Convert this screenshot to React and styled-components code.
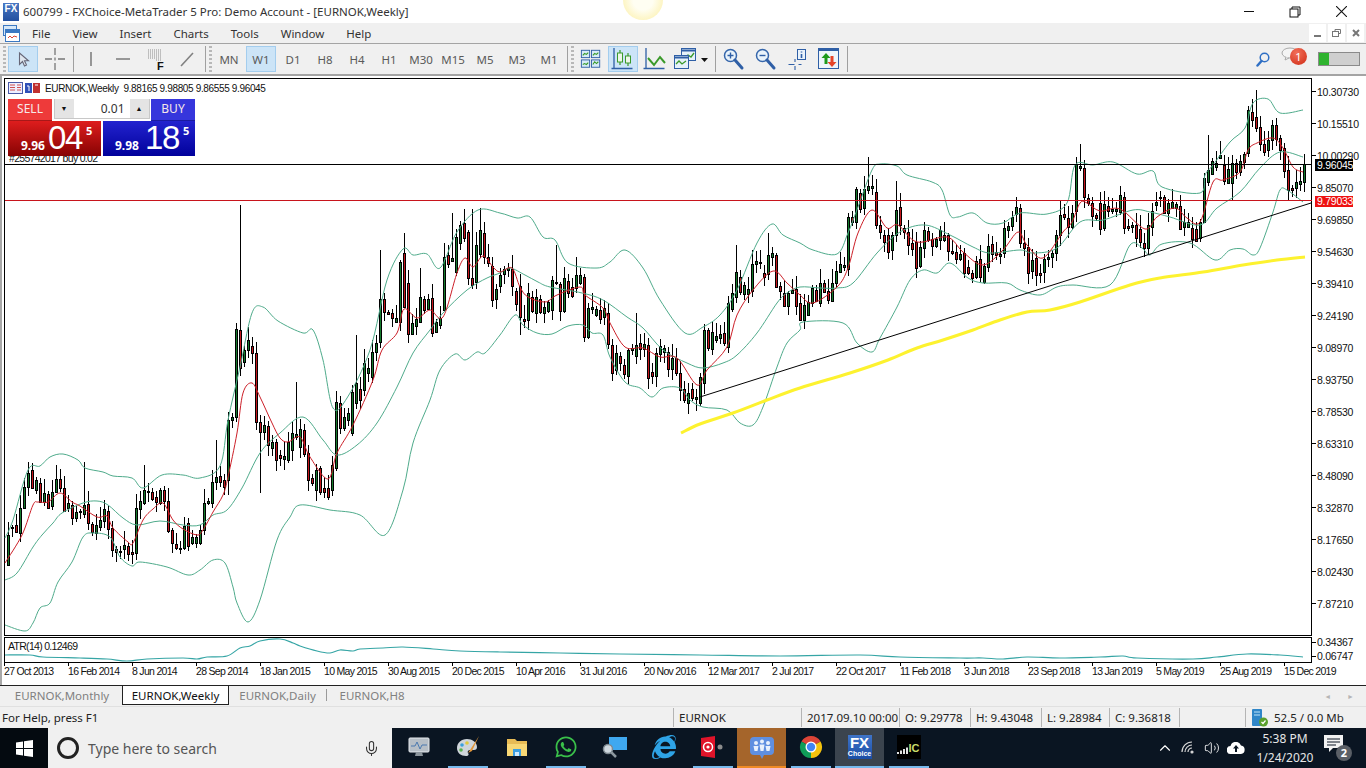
import React from 'react';
import styled, { createGlobalStyle } from 'styled-components';
import { FaWhatsapp, FaInternetExplorer } from 'react-icons/fa';
import { ChevronUp, Volume2, Mic } from 'lucide-react';

const GlobalStyle = createGlobalStyle`
  html, body { margin: 0; padding: 0; height: 100%; overflow: hidden; background: #fff; }
  body { font-family: "Noto Sans", "Open Sans", sans-serif; font-size: 11.5px; color: #222; }
  #root { height: 100%; }
`;

// Candle data: colour + top-bottom of the body in screen pixels, one every 4px from the start x
const BAR_BLOCKS = [
  [8, `g535-565 g527-528 r525-532 g508-533 g487-508 g473-487 r470-488 g480-490 r483-502 g493-502 r494-508 g492-506
    g479-492 r479-488 r488-511 g503-508 r505-518 g512-518 g511-512 g505-514 r504-523 r524-532 g525-533 g520-527
    g509-521 r511-529 r528-550 r549-552 g551-552 g545-549 r546-554 r552-554 g508-553 g501-509 g490-503 g491-492
    r492-499 r497-502 g490-503 r490-501 r501-531 r530-543 r544-548 r548-549 g526-548 r523-546 g537-543 g537-543
    g530-543 g503-530 g501-503 g482-503 g477-482 r476-482 r480-487`],
  [228, `g420-480 g417-420 g329-417 r330-368 g350-362 g340-350 r346-353 r353-422 r422-432 g425-432 r426-445 g442-448
    r442-460 r455-458 g456-459 g442-460 g433-450 g434-437 g429-447 r430-454 r453-480 r478-483 g470-490 r468-492
    r488-492 r488-497 g465-490 g402-468 r403-428 g417-428 g413-420 g392-433 g383-403 r389-400 g363-390 g368-373
    g352-377 g343-352 g299-342 r299-312 r312-314 r313-318 g318-322 g262-322 r253-307 r283-334 g323-334 g319-326
    g297-322 r299-310 g299-309 r298-333 g322-332 g318-325 g257-310 r255-264 g258-261 g237-272 g225-243 r223-238
    r232-278 r278-285 g245-282 g230-254 r233-257 r257-263 r266-300 g289-299`],
  [500, `g275-286 g269-274 g268-270 r269-286 r291-304 r286-317 r319-321 g293-320 r297-311 g297-313 r299-312 g307-313
    g302-311 g280-310 g282-283 r284-311 g278-311 r281-293 r287-296 g275-288 g275-283 r277-337 g308-337 g307-309
    g309-315 r310-319 g308-317 r313-344 r345-373 g353-370 r356-363 r365-374 g350-376 g348-350 g345-356 r343-349
    g344-349 r345-378 r372-376 g353-376 g346-354 g348-352 r352-369 g358-369 r358-373 r373-390 r389-400 g393-403
    r389-398 g397-399 g377-403 g330-383 r330-348 g332-349 g336-340 g334-338 r333-343 g303-347 g293-309 g272-297
    r277-292 g285-294 g289-294 g264-291 g261-264 g262-263 r273-277 g255-274 g253-257 r255-287 r286-291 r293-306
    g293-306 g290-293 r289-306`],
  [800, `r303-320 g305-320 g302-315 g288-303 r290-301 g283-303 r283-292 r291-300 g283-301 g271-283 g264-272 g265-267
    g217-269 r217-222 g189-222 r193-209 g189-208 g186-190 g186-188 r192-225 r225-232 r235-242 r235-252 g235-250
    g210-235 r207-225 r228-232 r232-245 r243-249 r242-268 g247-266 g230-248 r231-240 r239-246 g239-246 g230-240
    g235-240 r235-251 r251-253 r252-259 g254-259 r253-273 r267-273 r273-278 g261-277 r259-277 g266-282 g246-267
    r244-254 r252-255 g254-256 g228-253 g226-230 g217-226 g207-214 r208-243 r243-248 r247-273 g260-271 r258-275
    r273-275 g259-272 g257-259 g253-257 g235-253 g215-235 r214-217 r218-227 g213-227`],
  [1076, `g164-211 g166-168 r168-197 r198-203 r203-216 r215-218 r203-229 g204-228 r206-211 g209-211 g209-211 g195-212
    r197-228 r226-228 g225-227 r225-238 r229-242 r243-248 g225-248 g211-227 g202-205 g197-198 r197-213 g203-213
    g202-208 g204-208 r206-229 g222-227 g222-227 r228-239 r229-241 g222-238 g178-222 g170-182 g161-174 g163-167
    g155-158 r165-181 g169-183 g163-183 r163-172 g161-172 g154-162 g110-153 r112-120 r117-128 r127-144 r144-152
    g140-150 g125-140 r125-139 r138-150 r148-171 r170-190 r188-190 g182-188 g181-184 g164-182`],
];

// Long wicks that stand out in the reference, by candle x
const WICK_TOPS = {
  84: 462, 144: 465, 216: 440, 240: 205, 296: 382, 356: 335, 380: 250, 404: 233, 420: 268, 452: 213, 464: 209, 472: 209,
  480: 208, 556: 245, 576: 257, 636: 313, 736: 245, 768: 233, 868: 157, 896: 181, 1016: 197, 1076: 157, 1080: 144,
  1208: 135, 1256: 90,
};
const WICK_BOTTOMS = { 260: 493, 228: 495, 696: 411, 1232: 200, 520: 335 };

const bars = BAR_BLOCKS.flatMap(([startX, text]) =>
  text.trim().split(/\s+/).map((item, i) => {
    const x = startX + i * 4;
    const [top, bottom] = item.slice(1).split('-').map(Number);
    const seed = (x * 7919) % 97;
    return {
      x: x + 0.5,
      top,
      bottom,
      up: item[0] === 'g',
      high: WICK_TOPS[x] || top - (2 + seed % 13),
      low: WICK_BOTTOMS[x] || bottom + (1 + (seed * 3) % 11),
    };
  }));

// traced points -> curve through them
const smooth = text => {
  const p = text.trim().split(/\s+/).map(pair => pair.split(',').map(Number));
  let d = `M${p[0][0]} ${p[0][1]}`;
  for (let i = 0; i < p.length - 1; i++) {
    const p0 = p[i - 1] || p[i];
    const p1 = p[i];
    const p2 = p[i + 1];
    const p3 = p[i + 2] || p2;
    const c1x = p1[0] + (p2[0] - p0[0]) / 6;
    const c1y = p1[1] + (p2[1] - p0[1]) / 6;
    const c2x = p2[0] - (p3[0] - p1[0]) / 6;
    const c2y = p2[1] - (p3[1] - p1[1]) / 6;
    d += `C${c1x.toFixed(1)} ${c1y.toFixed(1)} ${c2x.toFixed(1)} ${c2y.toFixed(1)} ${p2[0]} ${p2[1]}`;
  }
  return d;
};

const UPPER = `5,538 13,520 28,470 40,466 50,457 63,454 78,460 85,468 103,472 113,476 132,478 143,488 162,475 183,475 200,478
  220,466 228,420 240,367 252,313 263,307 278,321 303,333 313,330 323,360 333,408 347,398 370,350 387,280 403,249 413,255
  427,254 440,268 457,232 478,210 500,213 517,218 530,217 543,237 555,240 568,263 597,268 610,262 625,250 643,268 660,300
  685,333 703,327 720,315 737,290 757,243 772,224 783,235 800,243 813,250 837,254 848,233 858,207 872,170 880,164 897,166
  907,175 932,182 942,190 950,215 958,217 973,213 987,223 1003,223 1020,213 1047,214 1067,203 1075,165 1093,165 1113,162
  1137,174 1153,171 1162,187 1200,193 1205,175 1213,165 1230,142 1245,128 1253,103 1268,99 1280,113 1303,110`;
const MIDDLE = `5,580 17,573 33,547 42,535 53,523 62,513 83,503 97,501 108,505 123,518 137,525 160,521 183,525 200,525 213,515
  227,510 242,488 260,453 280,433 303,417 323,440 337,455 357,445 377,423 397,387 413,353 430,330 443,313 467,290 487,278
  500,273 510,268 525,275 538,282 550,287 582,293 603,300 627,317 643,328 663,350 687,363 703,368 723,363 737,355 757,333
  777,303 787,293 800,287 820,288 837,288 853,283 877,253 900,232 925,225 950,235 973,247 990,253 1020,250 1033,253 1057,248
  1080,222 1103,220 1133,210 1150,212 1170,217 1200,225 1217,208 1240,192 1260,168 1280,152 1303,157`;
const LOWER = `5,625 25,631 33,623 40,608 50,603 58,582 72,562 83,537 93,533 110,537 120,557 132,566 140,562 167,567 188,575 200,570
  213,560 225,563 233,587 237,603 248,622 260,600 277,540 290,517 300,505 330,510 360,515 385,535 403,490 413,443 430,400
  440,370 455,354 465,360 477,352 485,353 500,335 515,315 523,325 537,333 552,334 568,326 583,325 592,333 603,335 610,357
  625,382 640,388 652,397 663,388 680,388 690,400 703,407 727,410 740,423 753,425 763,407 777,367 787,343 800,330 803,322
  843,323 857,343 872,352 880,338 897,307 910,280 923,270 937,273 950,263 968,278 983,283 1007,283 1020,290 1040,295 1057,287
  1073,285 1110,285 1130,245 1142,248 1150,255 1162,244 1190,243 1215,260 1230,250 1243,249 1253,255 1260,248 1273,212 1280,190
  1287,190 1303,202`;
const AVERAGE = `5,563 22,535 33,505 38,502 48,502 60,493 72,502 80,506 97,517 107,516 113,528 128,542 133,543 143,520 153,509 163,503
  173,520 183,529 197,535 203,530 213,512 223,495 228,477 237,433 243,393 252,383 260,397 272,423 280,438 288,442 300,437 310,457
  328,479 337,453 353,425 373,380 382,350 397,333 404,309 417,318 430,310 443,317 457,273 465,258 473,267 483,256 493,267 500,272
  512,268 520,287 528,297 545,302 557,295 580,287 585,295 603,308 610,323 625,347 643,348 660,357 677,358 697,385 707,370 727,347
  737,315 753,290 773,271 787,283 800,295 813,303 837,287 848,268 858,233 872,210 887,228 898,225 917,242 947,237 963,252 983,265
  1003,250 1018,232 1027,245 1043,258 1063,232 1072,222 1080,203 1087,203 1100,211 1120,209 1145,229 1157,217 1175,208 1187,218
  1200,222 1213,182 1223,180 1240,172 1248,150 1257,143 1273,138 1283,148 1293,167 1303,172`;
const YELLOW_TREND = `681,433 700,424 733,413 767,400 800,388 850,373 888,360 917,348 943,340 973,330 1000,320 1027,312 1050,310 1080,302
  1130,285 1160,278 1203,272 1243,265 1277,260 1305,257`;
const ATR_LINE = `5,655 30,655 43,657 80,658 107,659 127,661 147,659 183,658 197,659 207,657 227,656 240,648 250,646 260,641 280,639 293,643
  300,646 317,651 330,653 340,650 353,651 360,649 383,648 403,647 433,649 460,651 500,652 560,653 620,654 700,655 780,656 860,655
  900,657 960,658 983,658 1003,659 1027,657 1060,658 1100,657 1123,656 1137,658 1193,659 1217,657 1247,654 1280,655 1303,657`;

const PRICES = ['10.30730', '10.15510', '10.00290', '9.85070', '9.69850', '9.54630', '9.39410', '9.24190', '9.08970', '8.93750',
  '8.78530', '8.63310', '8.48090', '8.32870', '8.17650', '8.02430', '7.87210'];
const DATES = ['27 Oct 2013', '16 Feb 2014', '8 Jun 2014', '28 Sep 2014', '18 Jan 2015', '10 May 2015', '30 Aug 2015', '20 Dec 2015',
  '10 Apr 2016', '31 Jul 2016', '20 Nov 2016', '12 Mar 2017', '2 Jul 2017', '22 Oct 2017', '11 Feb 2018', '3 Jun 2018', '23 Sep 2018',
  '13 Jan 2019', '5 May 2019', '25 Aug 2019', '15 Dec 2019'];
const MENU = ['File', 'View', 'Insert', 'Charts', 'Tools', 'Window', 'Help'];
const PERIODS = ['MN', 'W1', 'D1', 'H8', 'H4', 'H1', 'M30', 'M15', 'M5', 'M3', 'M1'];

const Page = styled.div`
  position: relative;
  display: flex;
  flex-direction: column;
  width: 1366px;
  height: 768px;
  overflow: hidden;
`;

const Sun = styled.div`
  position: absolute;
  left: 623px;
  top: -20px;
  width: 40px;
  height: 40px;
  border-radius: 50%;
  background: radial-gradient(circle, #fffef2 35%, #fdf5c4 70%, #f1df8e 100%);
`;

const TitleBar = styled.div`
  display: flex;
  align-items: center;
  height: 23px;
  padding-left: 3px;
  background: #fff;
`;

const TitleText = styled.span`
  margin-left: 4px;
  font-size: 11.5px;
  color: #333;
  white-space: nowrap;
`;

const AppBadge = styled.div`
  display: flex;
  flex-direction: column;
  align-items: center;
  width: 16px;
  height: 18px;
  background: linear-gradient(#4a78c4, #23509f);
  color: #fff;
  font: bold 10px/11px "Liberation Sans", sans-serif;
`;

const WindowButtons = styled.div`
  display: flex;
  margin-left: auto;
  margin-right: 2px;
`;

const WindowButton = styled.div`
  display: flex;
  align-items: center;
  justify-content: center;
  width: 46px;
  height: 23px;
`;

const MenuBar = styled.div`
  display: flex;
  align-items: center;
  height: 20px;
  padding-left: 3px;
  background: #f0f0f0;
  border-bottom: 1px solid #a4a4a4;
`;

const MenuItem = styled.span`
  margin-left: ${p => p.$first ? '12px' : '22px'};
  font-size: 11.5px;
  color: #333;
`;

const DocButtons = styled.div`
  display: flex;
  gap: 2px;
  margin-left: auto;
  margin-right: 2px;
`;

const DocButton = styled.div`
  display: flex;
  align-items: center;
  justify-content: center;
  width: 17px;
  height: 18px;
  background: #fff;
`;

const ToolBar = styled.div`
  display: flex;
  align-items: center;
  height: 30px;
  padding-left: 2px;
  background: #f0f0f0;
  border-bottom: 2px solid #a4a4a4;
`;

const Grip = styled.div`
  width: 3px;
  height: 26px;
  margin: 0 2px 0 1px;
  background: repeating-linear-gradient(#b8b8b8 0 2px, transparent 2px 4px);
`;

const ToolSeparator = styled.div`
  width: 1px;
  height: 26px;
  margin: 0 2px 0 1px;
  background: #a0a0a0;
`;

const ToolButton = styled.div`
  display: flex;
  align-items: center;
  justify-content: center;
  flex: none;
  width: ${p => p.$wide ? '40px' : '30px'};
  height: 26px;
  margin-right: 2px;
  box-sizing: border-box;
  font-size: 11.5px;
  color: #5a5a5a;
  background: ${p => p.$active ? '#cce4f7' : 'transparent'};
  border: 1px solid ${p => p.$active ? '#a3cdee' : 'transparent'};
`;

const ToolRight = styled.div`
  display: flex;
  align-items: center;
  margin-left: auto;
  padding-right: 6px;
`;

const SearchSlot = styled.div`
  display: flex;
  margin-right: 11px;
`;

const NoticeSlot = styled.div`
  position: relative;
  width: 26px;
  height: 24px;
  margin-right: 11px;
`;

const NoticeBadge = styled.span`
  position: absolute;
  right: 0;
  top: 1px;
  display: flex;
  align-items: center;
  justify-content: center;
  width: 17px;
  height: 17px;
  border-radius: 50%;
  background: radial-gradient(circle at 40% 30%, #f2705a, #cf2b14);
  color: #fff;
  font-size: 11px;
`;

const SignalBar = styled.div`
  width: 42px;
  height: 14px;
  box-sizing: border-box;
  border: 1px solid #8a8a8a;
  background: linear-gradient(90deg, #2fb32f 0 10px, #cfcfcf 10px);
`;

const ChartPane = styled.div`
  position: relative;
  flex: 1;
  min-height: 0;
  background: #fff;
  border-left: 2px solid #a8a8a8;
  box-sizing: border-box;
`;

const ChartSvg = styled.svg`
  display: block;
  margin-left: -2px;
`;

const AxisText = styled.text`
  font-family: "Liberation Sans", sans-serif;
  font-size: 10.5px;
  letter-spacing: ${p => p.$tight ? '-0.7px' : '-0.25px'};
  fill: ${p => p.$light ? '#fff' : '#111'};
`;

const ChartLegend = styled.div`
  position: absolute;
  left: 6px;
  top: 6px;
  display: flex;
  align-items: center;
  gap: 5px;
  font: 10px "Liberation Sans", sans-serif;
  letter-spacing: -0.35px;
  color: #111;
  white-space: pre;
`;

const TradePanel = styled.div`
  position: absolute;
  left: 6px;
  top: 23px;
  width: 187px;
  background: #fff;
`;

const TradeTop = styled.div`
  display: flex;
  justify-content: space-between;
  height: 22px;
`;

const TradeButton = styled.div`
  width: 44px;
  text-align: center;
  line-height: 20px;
  font-size: 12px;
  color: #f6e8e8;
  background: ${p => p.$buy ? '#3636dc' : '#ee3a3a'};
  box-shadow: inset 0 -1px 0 ${p => p.$buy ? '#1a1aa0' : '#a81818'};
`;

const LotBox = styled.div`
  display: flex;
  width: 96px;
  height: 20px;
  box-sizing: border-box;
  border: 1px solid #c8c8c8;
  border-top: 0;
`;

const LotArrow = styled.div`
  display: flex;
  align-items: center;
  justify-content: center;
  width: 19px;
  background: #e4e4e4;
  font-size: 7px;
  color: #111;
`;

const LotValue = styled.div`
  flex: 1;
  padding-right: 5px;
  text-align: right;
  line-height: 19px;
  font-size: 12px;
  color: #333;
`;

const TradeBottom = styled.div`
  display: flex;
  gap: 2px;
  height: 35px;
`;

const PriceBox = styled.div`
  position: relative;
  display: flex;
  align-items: flex-end;
  flex: 1;
  padding-left: ${p => p.$buy ? '12px' : '13px'};
  color: #fff;
  background: ${p => p.$buy
    ? 'linear-gradient(#2323cf, #01019b)'
    : 'linear-gradient(#de1d1d, #870303)'};
`;

const PriceSmall = styled.span`
  margin-bottom: 3px;
  font: bold 12px/14px "Noto Sans", sans-serif;
`;

const PriceBig = styled.span`
  margin-left: ${p => p.$buy ? '6px' : '3px'};
  font: 33px/36px "Liberation Sans", sans-serif;
  letter-spacing: -1.3px;
`;

const PriceTail = styled.span`
  margin-left: 4px;
  align-self: flex-start;
  margin-top: 4px;
  font: bold 11px/12px "Noto Sans", sans-serif;
`;

const TabStrip = styled.div`
  display: flex;
  align-items: stretch;
  height: 20px;
  padding-left: 2px;
  background: #f0f0f0;
  border-top: 1px solid #222;
`;

const Tab = styled.div`
  display: flex;
  align-items: center;
  justify-content: center;
  box-sizing: border-box;
  width: ${p => p.$width}px;
  margin-bottom: 1px;
  font-size: 11.5px;
  color: ${p => p.$active ? '#111' : '#808080'};
  background: ${p => p.$active ? '#fff' : 'transparent'};
  border-left: 1px solid ${p => p.$active ? '#222' : 'transparent'};
  border-right: 1px solid ${p => p.$active ? '#222' : 'transparent'};
  border-bottom: 1px solid ${p => p.$active ? '#222' : 'transparent'};
`;

const TabDivider = styled.div`
  width: 1px;
  margin: 3px 0 5px;
  background: #9a9a9a;
`;

const TabArrows = styled.div`
  display: flex;
  gap: 16px;
  align-items: center;
  margin-left: auto;
  padding-right: 12px;
  font-size: 7px;
  color: #b5b5b5;
`;

const StatusBar = styled.div`
  display: flex;
  align-items: center;
  height: 22px;
  box-sizing: border-box;
  background: #f0f0f0;
  border-top: 1px solid #e0e0e0;
`;

const StatusCell = styled.div`
  display: flex;
  align-items: center;
  gap: 5px;
  box-sizing: border-box;
  width: ${p => p.$width}px;
  height: 19px;
  padding-left: ${p => p.$plain ? '2px' : '5px'};
  font-size: 11.5px;
  color: #222;
  white-space: nowrap;
  border-left: ${p => p.$plain ? '0' : '1px solid #b4b4b4'};
`;

const Taskbar = styled.div`
  display: flex;
  align-items: stretch;
  height: 40px;
  background: #0a1522;
  color: #fff;
`;

const StartButton = styled.div`
  display: flex;
  align-items: center;
  justify-content: center;
  width: 48px;
  background: #040a10;
`;

const SearchBox = styled.div`
  display: flex;
  align-items: center;
  box-sizing: border-box;
  width: 344px;
  padding: 0 12px 0 8px;
  background: #f0f0f0;
  color: #555;
  font-size: 14px;
`;

const Cortana = styled.div`
  width: 14px;
  height: 14px;
  margin: 0 9px 0 1px;
  border: 3px solid #222;
  border-radius: 50%;
  padding: 1px;
`;

const SearchLabel = styled.span`
  flex: 1;
`;

const TaskApps = styled.div`
  display: flex;
  padding-left: 2px;
`;

const TaskApp = styled.div`
  position: relative;
  display: flex;
  align-items: center;
  justify-content: center;
  width: 49px;
  padding-bottom: 2px;
  box-sizing: border-box;
  background: ${p => p.$bg || 'transparent'};

  &::after {
    content: '';
    display: ${p => p.$line ? 'block' : 'none'};
    position: absolute;
    bottom: 0;
    left: ${p => p.$bg ? '0' : '5px'};
    right: ${p => p.$bg ? '0' : '4px'};
    height: 2px;
    background: ${p => p.$line};
  }
`;

const FxTile = styled.div`
  width: 24px;
  height: 24px;
  background: linear-gradient(#3f74c8, #1a4ea6);
  text-align: center;
  font: bold 15px/15px "Liberation Sans", sans-serif;

  small {
    display: block;
    font-size: 7px;
    line-height: 7px;
  }
`;

const IcTile = styled.div`
  display: flex;
  align-items: flex-end;
  justify-content: flex-end;
  gap: 1px;
  width: 24px;
  height: 24px;
  padding: 0 1px 5px 0;
  box-sizing: border-box;
  background: #000;
  font: bold 11px/11px "Liberation Sans", sans-serif;
  color: #c9dc6b;
`;

const Tray = styled.div`
  display: flex;
  align-items: center;
  margin-left: auto;
  padding-right: 14px;
  font-size: 12px;
`;

const TraySlot = styled.div`
  display: flex;
  justify-content: center;
  width: ${p => p.$width || 24}px;
`;

const Clock = styled.div`
  width: 72px;
  text-align: center;
  line-height: 19px;
  color: #e6e6e6;
`;

const NotifyWrap = styled.div`
  position: relative;
  width: 28px;
  height: 26px;
  margin-left: 3px;
`;

const NotifyBadge = styled.span`
  position: absolute;
  right: 0;
  bottom: 0;
  width: 16px;
  height: 16px;
  border-radius: 50%;
  background: #5a5f66;
  text-align: center;
  line-height: 16px;
  font-size: 11px;
  font-weight: bold;
`;

const BLUE = '#2f5fa6';
const GREEN = '#3a9a2a';
const BAND = '#4fab8b';

function Glyph({ children, size = 24, view = 24 }) {
  return <svg width={size} height={size} viewBox={`0 0 ${view} ${view}`} fill="none">{children}</svg>;
}

function CursorIcon() {
  return <Glyph><path d="M8.5 6v11.5l3-3 2 4.5 2-1-2-4.2h4z" fill="#dfe6ee" stroke="#667" strokeWidth="1.1" /></Glyph>;
}

function CrossIcon() {
  return (
    <Glyph>
      <path d="M12 1v7M12 10.5v3M12 16v7M2 12h7M15 12h7" stroke="#777" strokeWidth="1.3" />
    </Glyph>
  );
}

function LineIcon({ d }) {
  return <Glyph><path d={d} stroke="#808080" strokeWidth="1.6" /></Glyph>;
}

function FiboIcon() {
  return (
    <Glyph>
      <path d="M5 3h14M5 5h14M5 7h14M5 9h14M5 11h14M13 13h6" stroke="#8d8d8d" strokeWidth="1" strokeDasharray="1 1" />
      <text x="14" y="23" fontSize="11" fontWeight="bold" fontFamily="Liberation Sans" fill="#111">F</text>
    </Glyph>
  );
}

function TileIcon() {
  return (
    <Glyph size={22}>
      <rect x="1.5" y="2.5" width="9" height="8" fill="#d7ebf8" stroke={BLUE} />
      <rect x="12.5" y="2.5" width="9" height="8" fill="#d7ebf8" stroke={BLUE} />
      <rect x="1.5" y="13" width="9" height="8" fill="#d7ebf8" stroke={BLUE} />
      <rect x="12.5" y="13" width="9" height="8" fill="#d7ebf8" stroke={BLUE} />
      <path d="M3 8l2-2 2 1 2-2M14 8l2-2 2 1 2-2M3 18l2-1 2 1 2-2M14 18l2-3 2 2 2-2" stroke={GREEN} strokeWidth="1.2" />
    </Glyph>
  );
}

function CandlesIcon() {
  return (
    <Glyph>
      <path d="M3 1v21M0.5 21.5h21" stroke={BLUE} strokeWidth="1.3" />
      <path d="M9 3v15M17 6v13" stroke={GREEN} strokeWidth="1.2" />
      <rect x="6.5" y="6" width="5" height="9" fill="#eef6e8" stroke={GREEN} />
      <rect x="14.5" y="9" width="5" height="7" fill="#eef6e8" stroke={GREEN} />
    </Glyph>
  );
}

function ChartLineIcon() {
  return (
    <Glyph>
      <path d="M3 1v21M0.5 21.5h21" stroke={BLUE} strokeWidth="1.3" />
      <path d="M5 11l6 7 6-8 5 6" stroke={GREEN} strokeWidth="2" />
    </Glyph>
  );
}

function ArrangeIcon() {
  return (
    <svg width="38" height="24" viewBox="0 0 38 24" fill="none">
      <rect x="8.5" y="1.5" width="14" height="12" fill="#e6f2fa" stroke={BLUE} />
      <path d="M8.5 3.5h14" stroke={BLUE} strokeWidth="2" />
      <path d="M10 11l5-3 3 2 3-4" stroke={GREEN} strokeWidth="1.3" />
      <rect x="1.5" y="8.5" width="14" height="13" fill="#e6f2fa" stroke={BLUE} />
      <path d="M1.5 10.5h14" stroke={BLUE} strokeWidth="2" />
      <path d="M3 17l3-3 3 3 4-3" stroke={GREEN} strokeWidth="1.3" />
      <path d="M28 11h7l-3.5 4z" fill="#111" />
    </svg>
  );
}

function ZoomIcon({ plus, size = 24 }) {
  return (
    <Glyph size={size}>
      <circle cx="9.5" cy="8.5" r="6" fill="#e9f3fb" stroke="#3566ab" strokeWidth="1.5" />
      <path d="M14 13l7 8" stroke="#2f5fa6" strokeWidth="3" strokeLinecap="round" />
      <path d={plus ? 'M6.5 8.5h6M9.5 5.5v6' : 'M6.5 8.5h6'} stroke="#2f5fa6" strokeWidth="1.4" />
    </Glyph>
  );
}

function InfoCrossIcon() {
  return (
    <Glyph>
      <path d="M3.5 17.5h6M13.5 17.5h3M10 12v3M10 19v4" stroke="#2f5fa6" strokeWidth="1.1" />
      <rect x="12.5" y="2.5" width="8" height="10" fill="#eaf3fb" stroke={BLUE} />
      <path d="M16.5 4.5v1M16.5 7v4" stroke={BLUE} strokeWidth="1.6" />
    </Glyph>
  );
}

function ArrowsIcon() {
  return (
    <Glyph>
      <rect x="1.5" y="1.5" width="20" height="20" fill="#eef5fb" stroke={BLUE} />
      <path d="M1.5 3h20" stroke={BLUE} strokeWidth="2" />
      <path d="M9 6l4.5 5h-3v6h-3v-6h-3z" fill="#1e9a1e" />
      <path d="M15 20l-4.5-5h3V9h3v6h3z" fill="#e5452a" />
    </Glyph>
  );
}

function BubbleIcon() {
  return (
    <svg width="18" height="14" viewBox="0 0 18 14" fill="none">
      <ellipse cx="9" cy="6" rx="8" ry="5" fill="#f4f4f4" stroke="#a9a9a9" />
      <path d="M5 10l-1 3 4-2" fill="#f4f4f4" stroke="#a9a9a9" />
    </svg>
  );
}

function CloseGlyph({ size }) {
  return (
    <svg width={size} height={size} viewBox="0 0 10 10" fill="none">
      <path d="M0 0l10 10M10 0L0 10" stroke="#111" strokeWidth="1" />
    </svg>
  );
}

function RestoreGlyph() {
  return (
    <svg width="12" height="12" viewBox="0 0 12 12" fill="none">
      <path d="M3 3V1h8v8H9" stroke="#111" />
      <rect x="1" y="3" width="8" height="8" stroke="#111" />
    </svg>
  );
}

function MenuWindowIcon() {
  return (
    <svg width="17" height="17" viewBox="0 0 17 17" fill="none">
      <rect x="0.5" y="0.5" width="13" height="10" fill="#d5e7f8" stroke="#3b78c2" />
      <rect x="2.5" y="4.5" width="14" height="12" fill="#fff" stroke="#3b78c2" />
      <path d="M3 6.5h13" stroke="#3b78c2" strokeWidth="3" />
      <path d="M5 13l2-2 2 2 2-2 3 1" stroke="#d43" strokeWidth="1" />
    </svg>
  );
}

function LegendIcons() {
  return (
    <svg width="32" height="12" viewBox="0 0 32 12" fill="none">
      <rect x="0.5" y="0.5" width="14" height="11" fill="#eef" stroke="#4a5aa8" />
      <path d="M2 3h5M2 5.5h5M2 8h5M9 3h4M9 5.5h4M9 8h4" stroke="#d05050" />
      <rect x="17" y="1" width="7" height="10" fill="#3050b8" />
      <rect x="25" y="1" width="7" height="10" fill="#c03030" />
      <path d="M19 4h2v5M27 3h3" stroke="#fff" />
    </svg>
  );
}

function ServerIcon() {
  return (
    <svg width="18" height="18" viewBox="0 0 18 18" fill="none">
      <rect x="1" y="0" width="10" height="17" rx="1" fill="#2f86c8" />
      <path d="M3 3h6M3 6h6" stroke="#bfe3f7" />
      <circle cx="12.5" cy="13" r="4.5" fill="#5aa02c" />
      <path d="M10.5 13l1.500 1.500 2.500-3" stroke="#fff" strokeWidth="1.2" />
    </svg>
  );
}

function WindowsLogo() {
  return (
    <svg width="17" height="17" viewBox="0 0 17 17">
      <path d="M0 2.4L7 1.4V8H0zM8 1.2L17 0V8H8zM0 9h7v6.600L0 14.600zM8 9h9v8l-9-1.200z" fill="#fff" />
    </svg>
  );
}

function MonitorApp() {
  return (
    <svg width="24" height="24" viewBox="0 0 24 24">
      <rect x="2" y="3" width="20" height="14" rx="1" fill="#b6bec6" stroke="#e6eaee" />
      <path d="M4 11h4l2-4 3 7 2-4h5" stroke="#4a79b0" fill="none" />
      <path d="M9 17h6l1 4H8z" fill="#8b949c" />
    </svg>
  );
}

function PaletteApp() {
  return (
    <svg width="24" height="24" viewBox="0 0 24 24">
      <path d="M11 4C5 4 1 8 1 13s4 8 9 8c3 0 3-2 2-3s0-3 2-3h4c2 0 3-1 3-3 0-5-5-8-10-8z" fill="#cfd5da" />
      <circle cx="6" cy="10" r="1.8" fill="#3aa0dc" />
      <circle cx="11" cy="8" r="1.8" fill="#e0c93c" />
      <circle cx="5" cy="15" r="1.8" fill="#58b050" />
      <path d="M23 1L14 15l-2 3 4-2z" fill="#e0953a" />
    </svg>
  );
}

function FolderApp() {
  return (
    <svg width="24" height="24" viewBox="0 0 24 24">
      <path d="M2 4h8l2 2h10v15H2z" fill="#e8bb55" />
      <path d="M2 9h20v12H2z" fill="#f8d775" />
      <rect x="8" y="14" width="8" height="7" fill="#3c9ee0" />
      <rect x="10" y="17" width="4" height="4" fill="#cfeafc" />
    </svg>
  );
}

function FinderApp() {
  return (
    <svg width="26" height="24" viewBox="0 0 26 24">
      <rect x="7" y="2" width="18" height="13" fill="#3fa8f0" />
      <circle cx="6" cy="14" r="4.5" fill="#cfd8df" stroke="#7d8890" strokeWidth="1.5" />
      <path d="M9 17l5 5" stroke="#8c979f" strokeWidth="2.5" />
    </svg>
  );
}

function TargetApp() {
  return (
    <svg width="26" height="24" viewBox="0 0 26 24">
      <path d="M1 3l14-2v22L1 21z" fill="#e0142a" />
      <circle cx="8" cy="12" r="4.5" fill="none" stroke="#fff" strokeWidth="1.5" />
      <circle cx="8" cy="12" r="1.6" fill="#fff" />
      <circle cx="20" cy="12" r="2.5" fill="#8c8c8c" />
    </svg>
  );
}

function PeopleApp() {
  return (
    <svg width="26" height="26" viewBox="0 0 26 26">
      <path d="M5 3h16a4 4 0 0 1 4 4v10a4 4 0 0 1-4 4h-6l-2 4-2-4H5a4 4 0 0 1-4-4V7a4 4 0 0 1 4-4z" fill="#5f8fe0" />
      <g fill="#e8f0fc">
        <circle cx="7" cy="9" r="2" /><circle cx="13" cy="7.500" r="2" /><circle cx="19" cy="9" r="2" />
        <path d="M4.500 12h5l-1 5h-3zM10.500 10.500h5l-1 6.500h-3zM16.500 12h5l-1 5h-3z" />
      </g>
    </svg>
  );
}

function ChromeApp() {
  return (
    <svg width="24" height="24" viewBox="0 0 24 24">
      <path d="M12 12L2.47 6.5A11 11 0 0 1 21.53 6.5Z" fill="#dc4437" />
      <path d="M12 12L21.53 6.5A11 11 0 0 1 12 23Z" fill="#f4c20d" />
      <path d="M12 12L12 23A11 11 0 0 1 2.47 6.5Z" fill="#0f9d58" />
      <circle cx="12" cy="12" r="5.5" fill="#fff" />
      <circle cx="12" cy="12" r="4.2" fill="#4285f4" />
    </svg>
  );
}

function WifiGlyph() {
  return (
    <svg width="16" height="15" viewBox="0 0 16 15" fill="none" stroke="#d8d8d8" strokeWidth="1.2">
      <path d="M1 11A10 10 0 0 1 11 1M4 11a7 7 0 0 1 7-7M7 11a4 4 0 0 1 4-4" />
      <circle cx="11" cy="11" r="1" fill="#d8d8d8" />
    </svg>
  );
}

function CloudGlyph() {
  return (
    <svg width="18" height="12" viewBox="0 0 18 12">
      <path d="M4 12a4 4 0 0 1-.5-8A5.500 5.500 0 0 1 14 3.500 4.300 4.300 0 0 1 14 12z" fill="#fff" />
      <path d="M9 3l3 3.500h-2V10H8V6.500H6z" fill="#0a1522" />
    </svg>
  );
}

function NotifyGlyph() {
  return (
    <svg width="20" height="18" viewBox="0 0 20 18">
      <path d="M0 0h19v13H9l-4 4v-4H0z" fill="#f2f2f2" />
      <path d="M3 4h13M3 7h13M3 10h9" stroke="#0a1522" />
    </svg>
  );
}

function IcBars() {
  return (
    <svg width="11" height="8" viewBox="0 0 11 8">
      <path d="M0 8V6h2v2zM3 8V4.500h2V8zM6 8V3h2v5zM9 8V1.500h2V8z" fill="#e4e4e4" />
    </svg>
  );
}

function PriceChart() {
  return (
    <ChartSvg width="1366" height="609" viewBox="0 76 1366 609">
      {/* frames */}
      <g fill="none" stroke="#000" shapeRendering="crispEdges">
        <rect x="4.5" y="78.5" width="1307" height="557" />
        <rect x="4.5" y="637.5" width="1307" height="25" />
      </g>

      {/* wicks + bodies */}
      <g shapeRendering="crispEdges">
        {bars.map(bar => (
          <g key={bar.x}>
            <line x1={bar.x} x2={bar.x} y1={bar.high} y2={bar.low} stroke="#000" />
            <rect
              x={bar.x - 1}
              y={bar.top + 0.5}
              width="2"
              height={Math.max(bar.bottom - bar.top, 1)}
              fill={bar.up ? '#147a2c' : '#c4161c'}
              stroke="#000"
            />
          </g>
        ))}
      </g>

      {/* indicators */}
      <g fill="none" strokeLinejoin="round">
        <path d={smooth(UPPER)} stroke={BAND} />
        <path d={smooth(MIDDLE)} stroke={BAND} />
        <path d={smooth(LOWER)} stroke={BAND} />
        <path d={smooth(AVERAGE)} stroke="#cc1f28" />
        <path d={smooth(YELLOW_TREND)} stroke="#fdf22f" strokeWidth="3" />
        <line x1="700" y1="397" x2="1311" y2="203" stroke="#000" />
        <path d={smooth(ATR_LINE)} stroke="#35a5a5" strokeWidth="1.2" />
      </g>

      {/* order and price levels */}
      <g shapeRendering="crispEdges">
        <line x1="5" x2="1312" y1="164.5" y2="164.5" stroke="#000" />
        <line x1="5" x2="1312" y1="200.5" y2="200.5" stroke="#c8141c" />
      </g>
      <AxisText $tight x="9" y="162">#255742017 buy 0.02</AxisText>
      <AxisText $tight x="8" y="650">ATR(14) 0.12469</AxisText>

      {/* price axis */}
      {PRICES.map((price, i) => (
        <g key={price}>
          <line x1="1312" x2="1316" y1={91.5 + i * 32} y2={91.5 + i * 32} stroke="#000" shapeRendering="crispEdges" />
          <AxisText x="1317" y={95.5 + i * 32}>{price}</AxisText>
        </g>
      ))}
      <line x1="1312" x2="1316" y1="642.5" y2="642.5" stroke="#000" shapeRendering="crispEdges" />
      <line x1="1312" x2="1316" y1="656.5" y2="656.5" stroke="#000" shapeRendering="crispEdges" />
      <AxisText x="1317" y="646">0.34367</AxisText>
      <AxisText x="1317" y="660">0.06747</AxisText>
      <rect x="1315" y="159" width="38" height="12" fill="#000" />
      <AxisText $light x="1317" y="168.5">9.96045</AxisText>
      <rect x="1315" y="196" width="38" height="11" fill="#ee1111" />
      <AxisText $light x="1317" y="205">9.79033</AxisText>

      {/* date axis */}
      {DATES.map((date, i) => (
        <g key={date}>
          <line x1={4.5 + i * 64} x2={4.5 + i * 64} y1="662" y2="666" stroke="#000" shapeRendering="crispEdges" />
          <AxisText $tight x={4 + i * 64} y="675">{date}</AxisText>
        </g>
      ))}
    </ChartSvg>
  );
}

function App() {
  return (
    <Page>
      <GlobalStyle />
      <TitleBar>
        <AppBadge>FX</AppBadge>
        <TitleText>600799 - FXChoice-MetaTrader 5 Pro: Demo Account - [EURNOK,Weekly]</TitleText>
        <WindowButtons>
          <WindowButton><svg width="10" height="2"><path d="M0 .5h10" stroke="#111" /></svg></WindowButton>
          <WindowButton><RestoreGlyph /></WindowButton>
          <WindowButton><CloseGlyph size={11} /></WindowButton>
        </WindowButtons>
      </TitleBar>
      <Sun />

      <MenuBar>
        <MenuWindowIcon />
        {MENU.map((item, i) => <MenuItem key={item} $first={i === 0}>{item}</MenuItem>)}
        <DocButtons>
          <DocButton><svg width="8" height="8"><path d="M0 7h7" stroke="#777" strokeWidth="2" /></svg></DocButton>
          <DocButton><svg width="9" height="9" fill="none"><path d="M3 2V.5h5.5v4H7" stroke="#777" /><rect x=".5" y="2.5" width="6" height="5" stroke="#777" /></svg></DocButton>
          <DocButton><svg width="8" height="8"><path d="M1 1l6 6M7 1L1 7" stroke="#777" strokeWidth="2" /></svg></DocButton>
        </DocButtons>
      </MenuBar>

      <ToolBar>
        <Grip />
        <ToolButton $active><CursorIcon /></ToolButton>
        <ToolButton><CrossIcon /></ToolButton>
        <ToolSeparator />
        <ToolButton><LineIcon d="M12 5v14" /></ToolButton>
        <ToolButton><LineIcon d="M5 12h14" /></ToolButton>
        <ToolButton><FiboIcon /></ToolButton>
        <ToolButton><LineIcon d="M6 19L18 6" /></ToolButton>
        <ToolSeparator />
        <Grip />
        {PERIODS.map(period => <ToolButton key={period} $active={period === 'W1'}>{period}</ToolButton>)}
        <ToolSeparator />
        <Grip />
        <ToolButton><TileIcon /></ToolButton>
        <ToolButton $active><CandlesIcon /></ToolButton>
        <ToolButton><ChartLineIcon /></ToolButton>
        <ToolButton $wide><ArrangeIcon /></ToolButton>
        <ToolSeparator />
        <ToolButton><ZoomIcon plus /></ToolButton>
        <ToolButton><ZoomIcon /></ToolButton>
        <ToolButton><InfoCrossIcon /></ToolButton>
        <ToolButton><ArrowsIcon /></ToolButton>
        <ToolSeparator />
        <ToolRight>
          <SearchSlot>
            <svg width="14" height="15" viewBox="0 0 14 15" fill="none">
              <circle cx="8.5" cy="5.5" r="4.3" stroke="#2f6fc4" strokeWidth="1.5" />
              <path d="M5.5 9L1.5 13.5" stroke="#2f6fc4" strokeWidth="2.5" strokeLinecap="round" />
            </svg>
          </SearchSlot>
          <NoticeSlot>
            <BubbleIcon />
            <NoticeBadge>1</NoticeBadge>
          </NoticeSlot>
          <SignalBar />
        </ToolRight>
      </ToolBar>

      <ChartPane>
        <PriceChart />
        <ChartLegend>
          <LegendIcons />
          <span>EURNOK,Weekly  9.88165 9.98805 9.86555 9.96045</span>
        </ChartLegend>
        <TradePanel>
          <TradeTop>
            <TradeButton>SELL</TradeButton>
            <LotBox>
              <LotArrow>▼</LotArrow>
              <LotValue>0.01</LotValue>
              <LotArrow>▲</LotArrow>
            </LotBox>
            <TradeButton $buy>BUY</TradeButton>
          </TradeTop>
          <TradeBottom>
            <PriceBox>
              <PriceSmall>9.96</PriceSmall>
              <PriceBig>04</PriceBig>
              <PriceTail>5</PriceTail>
            </PriceBox>
            <PriceBox $buy>
              <PriceSmall>9.98</PriceSmall>
              <PriceBig $buy>18</PriceBig>
              <PriceTail>5</PriceTail>
            </PriceBox>
          </TradeBottom>
        </TradePanel>
      </ChartPane>

      <TabStrip>
        <Tab $width={120}>EURNOK,Monthly</Tab>
        <Tab $width={107} $active>EURNOK,Weekly</Tab>
        <Tab $width={97}>EURNOK,Daily</Tab>
        <TabDivider />
        <Tab $width={90}>EURNOK,H8</Tab>
        <TabArrows><span>◄</span><span>►</span></TabArrows>
      </TabStrip>

      <StatusBar>
        <StatusCell $width={673} $plain>For Help, press F1</StatusCell>
        <StatusCell $width={128}>EURNOK</StatusCell>
        <StatusCell $width={98}>2017.09.10 00:00</StatusCell>
        <StatusCell $width={71}>O: 9.29778</StatusCell>
        <StatusCell $width={71}>H: 9.43048</StatusCell>
        <StatusCell $width={68}>L: 9.28984</StatusCell>
        <StatusCell $width={70}>C: 9.36818</StatusCell>
        <StatusCell $width={66} />
        <StatusCell $width={121}><ServerIcon />52.5 / 0.0 Mb</StatusCell>
      </StatusBar>

      <Taskbar>
        <StartButton><WindowsLogo /></StartButton>
        <SearchBox>
          <Cortana />
          <SearchLabel>Type here to search</SearchLabel>
          <Mic size={17} color="#333" strokeWidth={1.5} />
        </SearchBox>
        <TaskApps>
          <TaskApp><MonitorApp /></TaskApp>
          <TaskApp $line="#76b9ed"><PaletteApp /></TaskApp>
          <TaskApp><FolderApp /></TaskApp>
          <TaskApp $line="#76b9ed"><FaWhatsapp size={24} color="#3ac04a" /></TaskApp>
          <TaskApp><FinderApp /></TaskApp>
          <TaskApp><FaInternetExplorer size={24} color="#2ea3e6" /></TaskApp>
          <TaskApp $line="#76b9ed"><TargetApp /></TaskApp>
          <TaskApp $bg="#a5652b" $line="#f08a24"><PeopleApp /></TaskApp>
          <TaskApp $line="#76b9ed"><ChromeApp /></TaskApp>
          <TaskApp $bg="#3b444e" $line="#76b9ed">
            <FxTile>FX<small>Choice</small></FxTile>
          </TaskApp>
          <TaskApp $line="#76b9ed"><IcTile><IcBars />IC</IcTile></TaskApp>
        </TaskApps>
        <Tray>
          <TraySlot><ChevronUp size={18} strokeWidth={1.5} /></TraySlot>
          <TraySlot><WifiGlyph /></TraySlot>
          <TraySlot $width={22}><Volume2 size={16} strokeWidth={1.3} /></TraySlot>
          <TraySlot $width={26}><CloudGlyph /></TraySlot>
          <Clock>5:38 PM<br />1/24/2020</Clock>
          <NotifyWrap>
            <NotifyGlyph />
            <NotifyBadge>2</NotifyBadge>
          </NotifyWrap>
        </Tray>
      </Taskbar>
    </Page>
  );
}

export default App;
